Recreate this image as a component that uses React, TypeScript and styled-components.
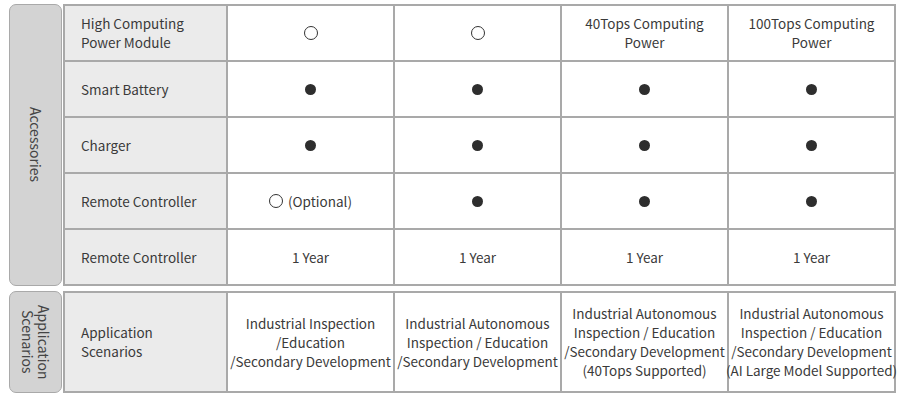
import React from "react";
import styled, { createGlobalStyle } from "styled-components";

const GlobalStyle = createGlobalStyle`
  body {
    margin: 0;
    background: #ffffff;
    font-family: "Noto Sans CJK SC", "Noto Sans", sans-serif;
    color: #333333;
  }
`;

type Mark = "open" | "full" | "optional" | string;

interface Row {
  label: string[];
  values: Mark[];
}

const accessories: Row[] = [
  {
    label: ["High Computing", "Power Module"],
    values: ["open", "open", "40Tops Computing\nPower", "100Tops Computing\nPower"],
  },
  { label: ["Smart Battery"], values: ["full", "full", "full", "full"] },
  { label: ["Charger"], values: ["full", "full", "full", "full"] },
  { label: ["Remote Controller"], values: ["optional", "full", "full", "full"] },
  { label: ["Remote Controller"], values: ["1 Year", "1 Year", "1 Year", "1 Year"] },
];

const scenarios: Row[] = [
  {
    label: ["Application", "Scenarios"],
    values: [
      "Industrial Inspection\n/Education\n/Secondary Development",
      "Industrial Autonomous\nInspection / Education\n/Secondary Development",
      "Industrial Autonomous\nInspection / Education\n/Secondary Development\n(40Tops Supported)",
      "Industrial Autonomous\nInspection / Education\n/Secondary Development\n(AI Large Model Supported)",
    ],
  },
];

const renderValue = (v: Mark) => {
  if (v === "open") return <OpenDot />;
  if (v === "full") return <FullDot />;
  if (v === "optional")
    return (
      <Inline>
        <OpenDot />
        <span>(Optional)</span>
      </Inline>
    );
  return (
    <Text>
      {v.split("\n").map((line, idx) => (
        <div key={idx}>{line}</div>
      ))}
    </Text>
  );
};

const Section: React.FC<{ title: string[]; rows: Row[]; rowHeight: number }> = ({
  title,
  rows,
  rowHeight,
}) => (
  <SectionLayout>
    <SideLabel>
      {title.map((t, idx) => (
        <div key={idx}>{t}</div>
      ))}
    </SideLabel>
    <Grid rowHeight={rowHeight} rowCount={rows.length}>
      {rows.map((row, ridx) => (
        <React.Fragment key={ridx}>
          <LabelCell>
            <Text>
              {row.label.map((l, idx) => (
                <div key={idx}>{l}</div>
              ))}
            </Text>
          </LabelCell>
          {row.values.map((v, vidx) => (
            <ValueCell key={vidx}>{renderValue(v)}</ValueCell>
          ))}
        </React.Fragment>
      ))}
    </Grid>
  </SectionLayout>
);

const App: React.FC = () => (
  <>
    <GlobalStyle />
    <Page>
      <Section title={["Accessories"]} rows={accessories} rowHeight={54} />
      <Section title={["Application", "Scenarios"]} rows={scenarios} rowHeight={98} />
    </Page>
  </>
);

export default App;

interface GridProps {
  rowHeight: number;
  rowCount: number;
}

const Page = styled.div`
  display: flex;
  flex-direction: column;
  gap: 5px;
  padding: 4px 4px 0 9px;
  width: 900px;
  box-sizing: border-box;
`;

const SectionLayout = styled.div`
  display: flex;
  gap: 1px;
`;

const SideLabel = styled.div`
  width: 53px;
  box-sizing: border-box;
  background: #d3d3d3;
  border: 1px solid #a9a9a9;
  border-radius: 7px;
  writing-mode: vertical-rl;
  display: flex;
  flex-direction: column;
  justify-content: center;
  align-items: center;
  text-align: center;
  font-size: 14px;
  line-height: 16px;
  color: #444444;
`;

const Grid = styled.div<GridProps>`
  display: grid;
  grid-template-columns: 161px repeat(4, 165px);
  grid-template-rows: ${(p) => `repeat(${p.rowCount}, ${p.rowHeight}px)`};
  gap: 2px;
  padding: 2px;
  background: #a9a9a9;
`;

const LabelCell = styled.div`
  background: #ebebeb;
  display: flex;
  align-items: center;
  padding-left: 16px;
  font-size: 13.5px;
  line-height: 19px;
  color: #3a3a3a;
`;

const ValueCell = styled.div`
  background: #ffffff;
  display: flex;
  align-items: center;
  justify-content: center;
  text-align: center;
  font-size: 13.5px;
  line-height: 19px;
  color: #3a3a3a;
`;

const Text = styled.div`
  white-space: nowrap;
`;

const Inline = styled.div`
  display: flex;
  align-items: center;
  gap: 5px;
`;

const OpenDot = styled.span`
  display: inline-block;
  width: 12px;
  height: 12px;
  border: 1.5px solid #333333;
  border-radius: 50%;
`;

const FullDot = styled.span`
  display: inline-block;
  width: 11px;
  height: 11px;
  background: #2e2e2e;
  border-radius: 50%;
`;
